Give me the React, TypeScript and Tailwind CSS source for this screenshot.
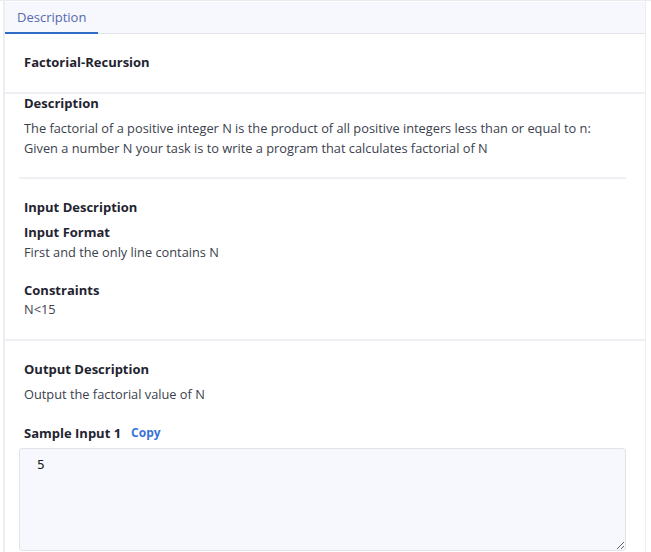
const Heading = ({ children, className = '' }: { children: React.ReactNode; className?: string }) => (
  <h3 className={`text-[13px] font-bold leading-[20px] text-[#1f2430] ${className}`}>{children}</h3>
);

const Text = ({ children, className = '' }: { children: React.ReactNode; className?: string }) => (
  <p className={`text-[12.8px] leading-[20px] text-[#3b414d] ${className}`}>{children}</p>
);

const App = () => {
  return (
    <div className="h-[552px] w-[651px] overflow-hidden bg-white font-['Open_Sans',sans-serif] border-t border-[#e9ebef]">
      <div className="ml-[3px] w-[643px] h-full border-l-2 border-r border-[#eceef1] pt-px">
        {/* Tabs */}
        <div className="flex h-[32px] bg-[#f6f8fd] border-b border-[#e2e6ec]">
          <button className="px-[12px] h-[32px] border-b-2 border-[#2e6cc6] text-[13px] text-[#5668ad] leading-[30px]">
            Description
          </button>
        </div>

        {/* Title */}
        <div className="px-[19px] pt-[18px] pb-[20px] border-b-2 border-[#eef0f3]">
          <Heading>Factorial-Recursion</Heading>
        </div>

        {/* Description */}
        <div className="pl-[14px] pr-[19px] pb-[20px] border-b-2 border-[#eef0f3]">
          <div className="px-[5px]">
            <Heading className="-mt-px leading-[18px]">Description</Heading>
            <Text className="mt-[5px]">
              The factorial of a positive integer N is the product of all positive integers less than or equal to n:
            </Text>
            <Text>Given a number N your task is to write a program that calculates factorial of N</Text>
          </div>
          <div className="mt-[19px] h-[2px] bg-[#eef0f3]" />
          <div className="px-[5px]">
            <Heading className="mt-[18px]">Input Description</Heading>
            <Heading className="mt-[5px]">Input Format</Heading>
            <Text>First and the only line contains N</Text>
            <Heading className="mt-[18px]">Constraints</Heading>
            <Text className="-mt-px">N&lt;15</Text>
          </div>
        </div>

        {/* Output */}
        <div className="pl-[14px] pr-[19px]">
          <div className="px-[5px]">
            <Heading className="mt-[18px]">Output Description</Heading>
            <Text className="mt-[5px]">Output the factorial value of N</Text>
            <div className="mt-[19px] flex items-center gap-[10px]">
              <Heading>Sample Input 1</Heading>
              <button className="text-[12px] font-bold text-[#3b73d6]">Copy</button>
            </div>
          </div>
          <textarea
            readOnly
            defaultValue="5"
            className="mt-[5px] block w-full h-[103px] rounded-[3px] border border-[#dfe3ea] bg-[#f6f8fd] px-[17px] py-[6px] font-['DejaVu_Sans_Mono',monospace] text-[13px] leading-[20px] text-[#222] outline-none"
          />
        </div>
      </div>
    </div>
  );
};

export default App;
